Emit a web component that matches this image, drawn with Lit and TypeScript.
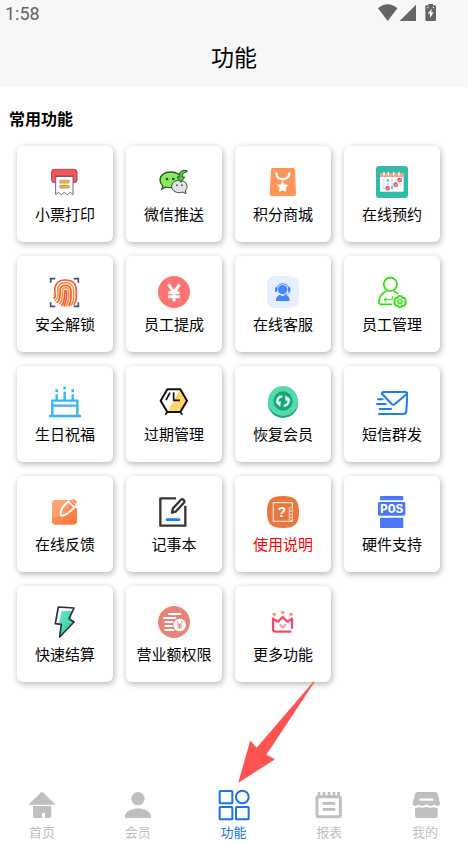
import { LitElement, html, svg, css } from "lit";
import type { SVGTemplateResult } from "lit";
import { customElement, property, state } from "lit/decorators.js";
import { classMap } from "lit/directives/class-map.js";

// Every icon is drawn on a 96 x 96 grid.
const icons: Record<string, SVGTemplateResult> = {
  printer: svg`
    <rect x="8" y="10" width="76" height="40" rx="8" fill="#fa5750" stroke="#a5435f" stroke-width="3"/>
    <path d="M20 30H72V86L64 79L55 86L46 79L37 86L28 79L20 86Z" fill="#fff" stroke="#77618f" stroke-width="3"/>
    <path d="M19 31H73" stroke="#7d3f68" stroke-width="3"/>
    <rect x="32" y="43" width="29" height="8" rx="3" fill="#fdb934" stroke="#a8704c" stroke-width="2"/>
    <rect x="32" y="58" width="29" height="8" rx="3" fill="#fdb934" stroke="#a8704c" stroke-width="2"/>`,
  wechat: svg`
    <path d="M38 18C18 18 6 28 6 42C6 49 9 55 14 59L12 69L23 63C28 65 33 65 38 65C58 65 71 55 71 42C71 28 58 18 38 18Z" fill="#8ae95f" stroke="#27581f" stroke-width="4"/>
    <path d="M64 43C50 43 41 51 41 61C41 72 51 80 64 80C68 80 71 79 74 78L84 83L82 73C86 70 87 66 87 61C87 51 78 43 64 43Z" fill="#e2e5e8" stroke="#37503c" stroke-width="3"/>
    <circle cx="27" cy="39" r="4" fill="#22551d"/><circle cx="46" cy="39" r="4" fill="#22551d"/>
    <circle cx="57" cy="58" r="3" fill="#55605a"/><circle cx="72" cy="58" r="3" fill="#55605a"/>
    <path d="M87 14C70 10 62 19 64 33H57L69 49L80 33H73C72 25 77 18 87 18Z" fill="#45cf3c" stroke="#27581f" stroke-width="3" stroke-linejoin="round"/>`,
  bag: svg`
    <path d="M17 6H79Q84 6 84 11L87 84Q87 90 81 90H14Q8 90 8 84L12 11Q12 6 17 6Z" fill="#ff9659"/>
    <path d="M28 22C29 46 66 46 67 22" fill="none" stroke="#fff" stroke-width="7" stroke-linecap="round"/>
    <path d="M47 48L51 57L61 58L54 65L56 75L47 70L38 75L40 65L33 58L43 57Z" fill="#fff" stroke="#fff" stroke-width="4" stroke-linejoin="round"/>`,
  calendar: svg`
    <rect width="96" height="96" rx="9" fill="#33bca4"/>
    <rect x="12" y="21" width="71" height="56" rx="3" fill="#fbfdff"/>
    <path d="M12 33V23Q12 21 15 21H80Q83 21 83 23V33Z" fill="#f3a18b"/>
    <path d="M24 19V27M37 19V27M53 19V27M69 19V27" stroke="#fff" stroke-width="4" stroke-linecap="round"/>
    <path d="M19 43H26M45 43H52M56 43H63M19 55H26M32 55H39M45 55H50M19 66H26M71 55H76" stroke="#d3e8fa" stroke-width="8"/>
    <path d="M32 43H39M45 65H52" stroke="#72bdf0" stroke-width="8"/>
    <circle cx="35" cy="67" r="7" fill="#ef4b55"/><circle cx="59" cy="56" r="7" fill="#ef4b55"/><circle cx="71" cy="42" r="7" fill="#ef4b55"/>
    <path d="M32 67L34 70L39 64M56 56L58 59L63 53M68 42L70 45L75 39" fill="none" stroke="#fff" stroke-width="2"/>`,
  fingerprint: svg`
    <g fill="none">
      <path d="M5 20V8H19M74 8H88V20M5 79V91H19M74 91H88V79" stroke="#3f536e" stroke-width="5"/>
      <g stroke-width="5" stroke-linecap="round">
        <path d="M15 66C20 63 20 57 18 51C14 29 25 12 48 12C70 12 82 24 82 44V62C82 71 80 78 75 85" stroke="#f4574c"/>
        <path d="M18 73C27 68 28 58 26 48C24 31 32 20 48 20C64 20 74 29 74 44V60C74 72 72 81 66 88" stroke="#f59a23"/>
        <path d="M24 79C33 72 34 61 33 48C32 35 38 28 49 28C60 28 66 35 66 45V61C66 73 64 82 59 89" stroke="#f4574c"/>
        <path d="M31 84C40 76 41 63 40 48C40 40 43 35 49 35C56 35 59 40 59 47V61C59 72 57 82 51 90" stroke="#f59a23"/>
        <path d="M38 88C46 79 47 65 47 48C47 42 53 42 53 48C53 66 53 77 45 89" stroke="#f4574c"/>
        <path d="M15 58L17 59" stroke="#f59a23"/>
      </g>
    </g>`,
  yen: svg`
    <circle cx="48" cy="48" r="48" fill="#ff7373"/>
    <path d="M31 25L48 49L65 25M48 49V76M31 50H65M31 62H65" fill="none" stroke="#fff" stroke-width="9"/>`,
  support: svg`
    <rect width="96" height="96" rx="24" fill="#e6eeff"/>
    <path d="M29 42C28 17 67 17 66 42" fill="none" stroke="#3f86ff" stroke-width="3"/>
    <circle cx="47" cy="41" r="14" fill="#3f86ff"/>
    <rect x="24" y="34" width="7" height="14" rx="3" fill="#3f86ff"/><rect x="63" y="34" width="7" height="14" rx="3" fill="#3f86ff"/>
    <path d="M67 48C65 54 60 56 54 56" fill="none" stroke="#3f86ff" stroke-width="2"/>
    <path d="M27 75C27 65 31 60 37 57H40Q47 64 54 57H58C64 60 68 65 68 75Z" fill="#3f86ff"/>`,
  staff: svg`
    <g fill="none" stroke="#2fdb0b" stroke-width="5" stroke-linecap="round" stroke-linejoin="round">
      <circle cx="43" cy="25" r="20"/>
      <path d="M29 47C17 52 9 65 9 79Q9 85 15 85H46M56 47Q61 49 65 53"/>
      <path d="M49 61V69Q49 71 47 71H24M31 66L24 71L31 76" stroke-width="3"/>
      <path d="M67 60H77L79 66L85 65L90 73L86 77L90 82L85 89L79 88L76 94H68L65 88L59 89L54 81L58 77L54 72L59 65L65 66Z"/>
      <circle cx="72" cy="77" r="6" stroke-width="4"/>
    </g>`,
  cake: svg`
    <g fill="none" stroke="#35b6f7" stroke-width="7">
      <path d="M0 90H96M10 89V44H85V89M10 59H85"/>
      <path d="M23 43V25M47 43V17M71 43V25"/>
      <path d="M23 10V18M47 2V10M71 10V18" stroke-width="8"/>
    </g>`,
  clock: svg`
    <path d="M67 10L87 44L67 78H28Z" fill="#ffd565"/>
    <g fill="none" stroke="#111" stroke-width="6" stroke-linejoin="round">
      <path d="M28 10H67L87 44L67 78H28L8 44Z"/>
      <path d="M47 19V43H66M36 20L24 42M28 78L22 86M67 78L73 86" stroke-width="5"/>
    </g>`,
  restore: svg`
    <circle cx="48" cy="51" r="45" fill="#12a773"/>
    <circle cx="48" cy="45" r="45" fill="#56d9ad"/>
    <circle cx="48" cy="45" r="29" fill="#12a975"/>
    <g fill="none" stroke="#fff" stroke-width="7">
      <path d="M34 54C27 43 34 31 46 31M62 36C69 47 62 59 50 59"/>
    </g>
    <path d="M26 49L41 46L40 62ZM55 28L70 41L55 44Z" fill="#fff"/>`,
  mail: svg`
    <g fill="none" stroke="#187df8" stroke-width="6" stroke-linecap="round" stroke-linejoin="round">
      <path d="M18 24Q16 18 24 18H88Q95 18 94 25L91 76Q90 84 82 84H9"/>
      <path d="M19 24L47 54Q52 58 57 54L92 24M6 40H20M3 54H29M11 69H45"/>
    </g>`,
  feedback: svg`
    <defs><linearGradient id="fb" x1="0" y1="0" x2="1" y2="1"><stop offset="0" stop-color="#ffa56b"/><stop offset="1" stop-color="#ff7038"/></linearGradient></defs>
    <rect x="9" y="12" width="75" height="74" rx="10" fill="url(#fb)"/>
    <path d="M9 67Q50 61 70 12H19Q9 12 9 22Z" fill="#fff" opacity=".12"/>
    <path d="M57 17C43 28 34 39 35 56Q36 61 43 58C57 54 65 46 75 35" fill="none" stroke="#fff" stroke-width="6" stroke-linecap="round"/>
    <path d="M55 10L85 40V12Z" fill="#fff"/>
    <path d="M59 15L64 11L81 27L76 32Z" fill="#ff8450"/>
    <path d="M73 13L80 19" stroke="#ff8450" stroke-width="7" stroke-linecap="round"/>
    <path d="M57 15L76 34" stroke="#fff" stroke-width="5"/>`,
  note: svg`
    <g fill="none" stroke="#353535" stroke-width="7" stroke-linejoin="round">
      <path d="M54 7H7V89H82V29"/>
      <path d="M42 50L45 37L69 11Q73 8 78 13Q81 17 77 21L53 47Z"/>
    </g>
    <path d="M27 71H63" stroke="#137fff" stroke-width="8" stroke-linecap="round"/>`,
  manual: svg`
    <path d="M48 0C84 0 96 12 96 48S84 96 48 96S0 84 0 48S12 0 48 0Z" fill="#e9783d"/>
    <path d="M76 34V20H19V76H76V70" fill="none" stroke="#fff" stroke-width="3"/>
    <path d="M76 35H68Q64 39 68 44Q64 49 68 54Q64 59 68 64Q64 70 68 73H76ZM67 45H76M67 55H76M67 64H76" fill="none" stroke="#fff" stroke-width="2"/>
    <text x="44" y="62" text-anchor="middle" font-family="Liberation Sans, sans-serif" font-weight="700" font-size="42" fill="#fff">?</text>`,
  pos: svg`
    <rect x="12" width="70" height="13" rx="3" fill="#4b77f9"/>
    <rect x="6" y="18" width="82" height="41" rx="4" fill="#4b77f9"/>
    <rect x="12" y="65" width="70" height="31" rx="3" fill="#4b77f9"/>
    <text x="47" y="52" text-anchor="middle" font-family="Liberation Mono, monospace" font-weight="700" font-size="39" fill="#fff">POS</text>`,
  bolt: svg`
    <defs><linearGradient id="bl" x1="0" y1="0" x2="1" y2="1"><stop offset="0" stop-color="#65e8c7"/><stop offset="1" stop-color="#2fc79c"/></linearGradient></defs>
    <path d="M38 15H69L58 39L75 48L34 90L39 54L30 50Z" fill="url(#bl)"/>
    <path d="M28 3L75 6L60 38L75 48L32 93L37 55L19 53Z" fill="none" stroke="#273038" stroke-width="5" stroke-linejoin="round"/>`,
  revenue: svg`
    <circle cx="48" cy="48" r="48" fill="#e8837a"/>
    <path d="M33 24H67M18 36H52M22 48H44M22 60H42M22 72H50" stroke="#fff" stroke-width="6" stroke-linecap="round"/>
    <circle cx="65" cy="57" r="22" fill="#e8837a"/><circle cx="65" cy="57" r="19" fill="#fff"/>
    <path d="M57 46L65 57L73 46M65 57V69M57 57H73M57 63H73" fill="none" stroke="#e8837a" stroke-width="3"/>`,
  crown: svg`
    <path d="M75 65V38L61 47L47 33L33 47L18 38V69Q18 77 26 77H70" fill="none" stroke="#fb4667" stroke-width="7" stroke-linecap="round" stroke-linejoin="round"/>
    <path d="M40 57L47 64L55 57" fill="none" stroke="#fc91a4" stroke-width="6" stroke-linecap="round"/>
    <circle cx="22" cy="25" r="5" fill="#ff9255"/><circle cx="47" cy="19" r="5" fill="#ff9255"/><circle cx="72" cy="25" r="5" fill="#ff9255"/>`,
  home: svg`
    <path d="M44 11Q48 7 52 11L86 44Q88 47 85 47H11Q8 47 10 44Z" fill="currentColor"/>
    <path d="M21 51H76V80Q76 87 69 87H57V75Q57 71 53 71Q48 71 48 75V87H28Q21 87 21 80Z" fill="currentColor"/>`,
  member: svg`
    <circle cx="48" cy="29" r="20" fill="currentColor"/>
    <path d="M9 87V78C20 52 76 52 87 78V87Z" fill="currentColor"/>`,
  apps: svg`
    <g fill="none" stroke="currentColor" stroke-width="6">
      <rect x="5" y="6" width="38" height="37" rx="2"/><circle cx="73" cy="24" r="19"/>
      <rect x="5" y="54" width="38" height="37" rx="2"/><rect x="54" y="54" width="38" height="37" rx="2"/>
    </g>`,
  report: svg`
    <rect x="12" y="23" width="70" height="60" rx="4" fill="none" stroke="currentColor" stroke-width="9"/>
    <path d="M18 9V24M33 9V24M48 9V24M63 9V24M77 9V24" stroke="currentColor" stroke-width="8"/>
    <path d="M29 43H67M29 61H67" stroke="currentColor" stroke-width="8"/>`,
  shop: svg`
    <path d="M25 9H79Q84 9 86 14L93 43Q93 51 85 51Q78 51 76 46Q73 51 65 51Q57 51 52 46Q47 51 39 51Q31 51 28 46Q26 51 19 51Q11 51 11 43L18 14Q20 9 25 9Z" fill="currentColor"/>
    <path d="M34 32H70" stroke="#fff" stroke-width="7" stroke-linecap="round"/>
    <path d="M18 56Q27 57 30 54Q39 59 52 53Q64 59 74 54Q78 57 86 56V80Q86 87 79 87H25Q18 87 18 80Z" fill="currentColor"/>`,
};

@customElement("app-icon")
class AppIcon extends LitElement {
  static styles = css`
    :host { display: block; width: 32px; height: 32px; }
    .icon { display: block; width: 100%; height: 100%; }
  `;
  @property() name = "";
  render() {
    return html`<svg class="icon" viewBox="0 0 96 96" aria-hidden="true">${icons[this.name]}</svg>`;
  }
}

@customElement("feature-card")
class FeatureCard extends LitElement {
  static styles = css`
    :host { display: block; }
    .card {
      display: flex; flex-direction: column; align-items: center; gap: 5px;
      box-sizing: border-box; width: 100%; min-height: 96px; padding: 20px 0 17px;
      border: 0; border-radius: 6px; background: #fff; color: #000;
      box-shadow: 1px 2px 6px rgba(0, 0, 0, 0.3);
      font: inherit; font-size: 15px; line-height: 22px; white-space: nowrap; cursor: pointer;
    }
    .highlight { color: #f00; }
  `;
  @property() icon = "";
  @property() label = "";
  @property({ type: Boolean }) highlight = false;
  render() {
    return html`<button class=${classMap({ card: true, highlight: this.highlight })} type="button">
      <app-icon name=${this.icon}></app-icon><span>${this.label}</span>
    </button>`;
  }
}

const features: { icon: string; label: string; highlight?: boolean }[] = [
  { icon: "printer", label: "小票打印" },
  { icon: "wechat", label: "微信推送" },
  { icon: "bag", label: "积分商城" },
  { icon: "calendar", label: "在线预约" },
  { icon: "fingerprint", label: "安全解锁" },
  { icon: "yen", label: "员工提成" },
  { icon: "support", label: "在线客服" },
  { icon: "staff", label: "员工管理" },
  { icon: "cake", label: "生日祝福" },
  { icon: "clock", label: "过期管理" },
  { icon: "restore", label: "恢复会员" },
  { icon: "mail", label: "短信群发" },
  { icon: "feedback", label: "在线反馈" },
  { icon: "note", label: "记事本" },
  { icon: "manual", label: "使用说明", highlight: true },
  { icon: "pos", label: "硬件支持" },
  { icon: "bolt", label: "快速结算" },
  { icon: "revenue", label: "营业额权限" },
  { icon: "crown", label: "更多功能" },
];

const tabs = [
  { id: "home", label: "首页" },
  { id: "member", label: "会员" },
  { id: "apps", label: "功能" },
  { id: "report", label: "报表" },
  { id: "shop", label: "我的" },
];

@customElement("app-root")
class AppRoot extends LitElement {
  static styles = css`
    :host {
      display: flex; flex-direction: column; min-height: 100vh;
      background: #fff; color: #000;
      font-family: "Noto Sans CJK SC", sans-serif;
    }
    .top { background: #f7f7f7; }
    .status {
      display: flex; align-items: center; justify-content: space-between;
      height: 28px; padding: 0 32px 0 5px; color: #646464;
      font: 400 18px/28px Roboto, sans-serif;
    }
    .signals { display: block; width: 58px; height: 17px; margin-bottom: 3px; }
    .title { margin: 0; padding: 12px 0 15px; font-size: 23px; line-height: 32px; font-weight: 400; text-align: center; }
    .section { padding: 19px 28px 24px 17px; }
    .heading { margin: 0 0 16px -8px; font-size: 16px; line-height: 24px; font-weight: 700; }
    .grid { display: grid; grid-template-columns: repeat(4, 1fr); gap: 14px 13px; }
    .tabs { display: flex; justify-content: space-between; margin-top: auto; padding: 0 25px 2px 24px; }
    .tab {
      position: relative; display: flex; flex-direction: column; align-items: center; gap: 2px;
      width: 36px; color: #bfbfbf; font-size: 13px; line-height: 18px; text-decoration: none;
    }
    .active { color: #1a73e8; }
    .pointer { position: absolute; left: 22px; bottom: calc(100% + 6px); width: 78px; height: 102px; pointer-events: none; }
  `;

  @state() private current = "apps";

  private select(event: Event, id: string) {
    event.preventDefault();
    this.current = id;
  }

  render() {
    return html`
      <header class="top">
        <div class="status">
          <span>1:58</span>
          <svg class="signals" viewBox="0 0 174 51" aria-label="网络与电量">
            <g fill="#646464">
              <path d="M0 13Q29 -12 58 13L29 51Z"/>
              <path d="M65 51L114 2V51Z"/>
              <path d="M151 0H165V4H170Q174 4 174 8V47Q174 51 170 51H146Q142 51 142 47V8Q142 4 146 4H151Z"/>
            </g>
            <path d="M161 14L149 29H156V42L167 25H160Z" fill="#f7f7f7"/>
            <path d="M147 12L152 9M164 9L169 12" stroke="#f7f7f7" stroke-width="3"/>
          </svg>
        </div>
        <h1 class="title">功能</h1>
      </header>
      <main class="section">
        <h2 class="heading">常用功能</h2>
        <div class="grid">
          ${features.map((f) => html`<feature-card icon=${f.icon} label=${f.label} ?highlight=${f.highlight ?? false}></feature-card>`)}
        </div>
      </main>
      <nav class="tabs">
        ${tabs.map((t) => html`
          <a class=${classMap({ tab: true, active: t.id === this.current })} href="#${t.id}" @click=${(e: Event) => this.select(e, t.id)}>
            <app-icon name=${t.id}></app-icon><span>${t.label}</span>
            ${t.id === "apps" ? html`<svg class="pointer" viewBox="0 0 234 306" aria-hidden="true">
              <path d="M226 2Q229 0 229 4L85 221L109 233V236L4 304Q1 305 2 301L36 181Q38 179 40 182L56 200Z" fill="#ff5252"/>
            </svg>` : null}
          </a>`)}
      </nav>
    `;
  }
}
